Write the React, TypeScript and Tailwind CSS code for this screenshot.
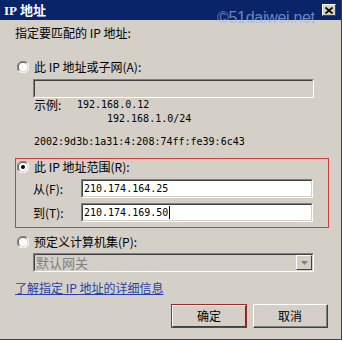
import React from "react";

const Radio = ({ checked }: { checked?: boolean }) => (
  <svg width="12" height="12" viewBox="0 0 12 12" className="shrink-0">
    <circle cx="6" cy="6" r="5.5" fill="#ffffff" />
    <path d="M1.8 10.2 A5.5 5.5 0 0 1 10.2 1.8" fill="none" stroke="#808080" strokeWidth="1" />
    <path d="M10.2 1.8 A5.5 5.5 0 0 1 1.8 10.2" fill="none" stroke="#ffffff" strokeWidth="1" />
    <path d="M2.6 9.4 A4.5 4.5 0 0 1 9.4 2.6" fill="none" stroke="#404040" strokeWidth="1" />
    <path d="M9.4 2.6 A4.5 4.5 0 0 1 2.6 9.4" fill="none" stroke="#d4d0c8" strokeWidth="1" />
    {checked && <circle cx="6" cy="6" r="2" fill="#000000" />}
  </svg>
);

const mono = "font-['DejaVu_Sans_Mono','Liberation_Mono',monospace] text-[10px]";

export default function App() {
  return (
    <div className="relative w-[342px] h-[340px] bg-[#d4d0c8] text-black text-[12px] leading-[12px] font-['Noto_Sans_CJK_SC','Noto_Sans',sans-serif] border-r border-b border-r-[#404040] border-b-[#404040] overflow-hidden">
      {/* title bar */}
      <div className="h-[20px] bg-[#0a246a] flex items-center justify-between pl-[4px] pr-[5px]">
        <span className="text-white font-bold text-[13px] leading-[13px]">
          <span className="font-['Liberation_Serif',serif]">IP</span> 地址
        </span>
        <div className="relative z-10 w-[14px] h-[12px] bg-[#d4d0c8] border-t border-l border-t-white border-l-white border-r border-b border-r-[#404040] border-b-[#404040] flex items-center justify-center">
          <svg width="8" height="7" viewBox="0 0 8 7">
            <path d="M0.5 0.5 L7.5 6.5 M7.5 0.5 L0.5 6.5" stroke="#000" strokeWidth="1.6" />
          </svg>
        </div>
      </div>

      <div className="pl-[15px] pr-[13px]">
        <div className="mt-[7px] h-[12px]">指定要匹配的 IP 地址:</div>

        <div className="mt-[21px] h-[13px] flex items-center gap-[5px] pl-[2px]">
          <Radio />
          <span>此 IP 地址或子网(A):</span>
        </div>

        <div className="mt-[6px] ml-[18px] w-[281px] h-[19px] border-t border-l border-t-[#808080] border-l-[#808080] border-r border-b border-r-white border-b-white">
          <div className="w-full h-full border-t border-l border-t-[#404040] border-l-[#404040] border-r border-b border-r-[#d4d0c8] border-b-[#d4d0c8]" />
        </div>

        <div className="ml-[19px] mt-[1px] h-[12px] flex items-center">
          <span className="w-[43px]">示例:</span>
          <span className={mono}>192.168.0.12</span>
        </div>
        <div className="ml-[92px] mt-[2px] h-[12px] flex items-center">
          <span className={mono}>192.168.1.0/24</span>
        </div>
        <div className="ml-[19px] mt-[11px] h-[12px] flex items-center">
          <span className={mono}>2002:9d3b:1a31:4:208:74ff:fe39:6c43</span>
        </div>

        {/* red highlight */}
        <div className="mt-[10px] w-[314px] h-[70px] border border-[#d0403c] pt-[1px]">
          <div className="h-[13px] flex items-center gap-[5px] pl-[1px]">
            <Radio checked />
            <span>此 IP 地址范围(R):</span>
          </div>
          <div className="mt-[6px] flex items-center">
            <span className="w-[65px] pl-[17px]">从(F):</span>
            <div className="w-[232px] h-[19px] bg-white border-t border-l border-t-[#808080] border-l-[#808080] border-r border-b border-r-white border-b-white">
              <div className="w-full h-full border-t border-l border-t-[#404040] border-l-[#404040] border-r border-b border-r-[#d4d0c8] border-b-[#d4d0c8] flex items-center pl-[1px]">
                <span className={mono}>210.174.164.25</span>
              </div>
            </div>
          </div>
          <div className="mt-[5px] flex items-center">
            <span className="w-[65px] pl-[17px]">到(T):</span>
            <div className="w-[232px] h-[19px] bg-white border-t border-l border-t-[#808080] border-l-[#808080] border-r border-b border-r-white border-b-white">
              <div className="w-full h-full border-t border-l border-t-[#404040] border-l-[#404040] border-r border-b border-r-[#d4d0c8] border-b-[#d4d0c8] flex items-center pl-[1px]">
                <span className={mono}>210.174.169.50</span>
                <span className="w-px h-[13px] bg-black ml-[1px]" />
              </div>
            </div>
          </div>
        </div>

        <div className="mt-[7px] h-[13px] flex items-center gap-[5px] pl-[2px]">
          <Radio />
          <span>预定义计算机集(P):</span>
        </div>

        <div className="mt-[5px] ml-[18px] w-[281px] h-[19px] border-t border-l border-t-[#808080] border-l-[#808080] border-r border-b border-r-white border-b-white">
          <div className="w-full h-full border-t border-l border-t-[#404040] border-l-[#404040] border-r border-b border-r-[#d4d0c8] border-b-[#d4d0c8] flex items-center justify-between pl-[1px]">
            <span className="text-[#808080] text-[13px]">默认网关</span>
            <div className="w-[16px] h-[15px] bg-[#d4d0c8] border-t border-l border-t-white border-l-white border-r border-b border-r-[#404040] border-b-[#404040] flex items-center justify-center">
              <svg width="7" height="4" viewBox="0 0 7 4">
                <path d="M0 0 H7 L3.5 4 Z" fill="#808080" />
              </svg>
            </div>
          </div>
        </div>

        <div className="mt-[10px] h-[12px]">
          <span className="text-[#2a3fa8] underline underline-offset-[1px]">了解指定 IP 地址的详细信息</span>
        </div>

        <div className="mt-[10px] flex justify-end gap-[6px]">
          <div className="w-[76px] h-[24px] border border-[#a02828]">
            <div className="w-full h-full bg-[#d4d0c8] border-t border-l border-t-white border-l-white border-r border-b border-r-[#404040] border-b-[#404040] flex items-center justify-center">
              确定
            </div>
          </div>
          <div className="w-[75px] h-[24px] bg-[#d4d0c8] border-t border-l border-t-white border-l-white border-r border-b border-r-[#404040] border-b-[#404040]">
            <div className="w-full h-full border-r border-b border-r-[#808080] border-b-[#808080] flex items-center justify-center">
              取消
            </div>
          </div>
        </div>
      </div>

      {/* watermark */}
      <div className="absolute left-[217px] top-[8px] text-[16px] leading-[20px] tracking-[-0.3px] font-['Liberation_Sans',sans-serif] text-[rgba(150,180,230,0.7)] pointer-events-none">
        ©51daiwei.net
      </div>
    </div>
  );
}
